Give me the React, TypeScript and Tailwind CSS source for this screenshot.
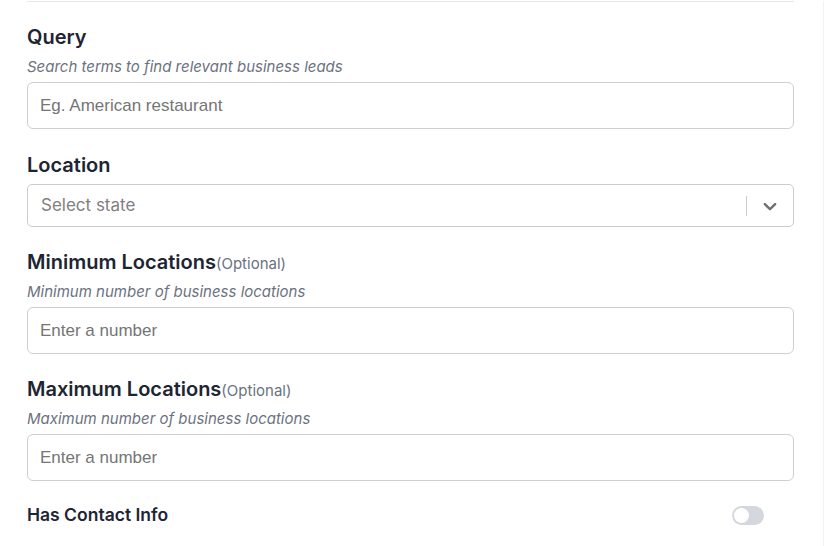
import { useState } from 'react'

const font = { fontFamily: 'Inter, "Noto Sans", sans-serif' }

function Label({ text, optional, gap = 'mb-2' }: { text: string; optional?: boolean; gap?: string }) {
  return (
    <div className={`${gap} flex h-6 items-baseline leading-6`}>
      <span className="text-[20px] font-semibold text-[#1e2532]">{text}</span>
      {optional && <span className="text-[15px] leading-6 text-[#6b7280]">(Optional)</span>}
    </div>
  )
}

function Hint({ text }: { text: string }) {
  return <p className="mb-[5px] text-[15px] italic leading-5 text-[#6b7280]">{text}</p>
}

function TextInput({ placeholder }: { placeholder: string }) {
  return (
    <input
      type="text"
      placeholder={placeholder}
      className="block h-[47px] w-full rounded-md border border-[#cfcfcf] bg-white px-3 font-['Liberation_Sans',Arial,sans-serif] text-[17px] text-[#1e2532] outline-none placeholder:text-[#757575]"
    />
  )
}

function StateSelect() {
  return (
    <div className="flex h-[43px] w-full items-center rounded-[5px] border border-[#cccccc] bg-white">
      <div className="flex-1 pl-[13px] text-[17px] text-[#808080]">Select state</div>
      <span className="h-5 w-px bg-[#cccccc]" />
      <div className="flex h-full w-[46px] items-center justify-center">
        <svg viewBox="0 0 20 20" className="h-[22px] w-[22px] fill-[#6f6f6f]">
          <path d="M4.516 7.548c0.436-0.446 1.043-0.481 1.576 0l3.908 3.747 3.908-3.747c0.533-0.481 1.141-0.446 1.574 0 0.436 0.445 0.408 1.197 0 1.615-0.406 0.418-4.695 4.502-4.695 4.502-0.217 0.223-0.502 0.335-0.787 0.335s-0.57-0.112-0.789-0.335c0 0-4.287-4.084-4.695-4.502s-0.436-1.17 0-1.615z" />
        </svg>
      </div>
    </div>
  )
}

function Toggle() {
  const [on, setOn] = useState(false)
  return (
    <button
      type="button"
      onClick={() => setOn(!on)}
      className={`flex h-[19px] w-[32px] items-center rounded-full p-[2px] ${on ? 'justify-end bg-[#3b82f6]' : 'justify-start bg-[#d4d7dd]'}`}
    >
      <span className="h-[15px] w-[15px] rounded-full bg-white" />
    </button>
  )
}

export default function App() {
  return (
    <div style={font} className="h-[546px] w-[824px] border-r border-[#f1f2f4] bg-white">
      <div className="pl-[27px] pr-[29px]">
        <div className="mt-px h-px bg-[#e7e8eb]" />
        <div className="pt-[23px]">
          <div className="mb-6">
            <Label text="Query" />
            <Hint text="Search terms to find relevant business leads" />
            <TextInput placeholder="Eg. American restaurant" />
          </div>
          <div className="mb-[23px]">
            <Label text="Location" gap="mb-[7px]" />
            <StateSelect />
          </div>
          <div className="mb-[23px]">
            <Label text="Minimum Locations" optional />
            <Hint text="Minimum number of business locations" />
            <TextInput placeholder="Enter a number" />
          </div>
          <div className="mb-[22px]">
            <Label text="Maximum Locations" optional />
            <Hint text="Maximum number of business locations" />
            <TextInput placeholder="Enter a number" />
          </div>
          <div className="flex items-center justify-between pr-[30px]">
            <span className="text-[17.5px] font-semibold leading-6 text-[#1e2532]">Has Contact Info</span>
            <Toggle />
          </div>
        </div>
      </div>
    </div>
  )
}
